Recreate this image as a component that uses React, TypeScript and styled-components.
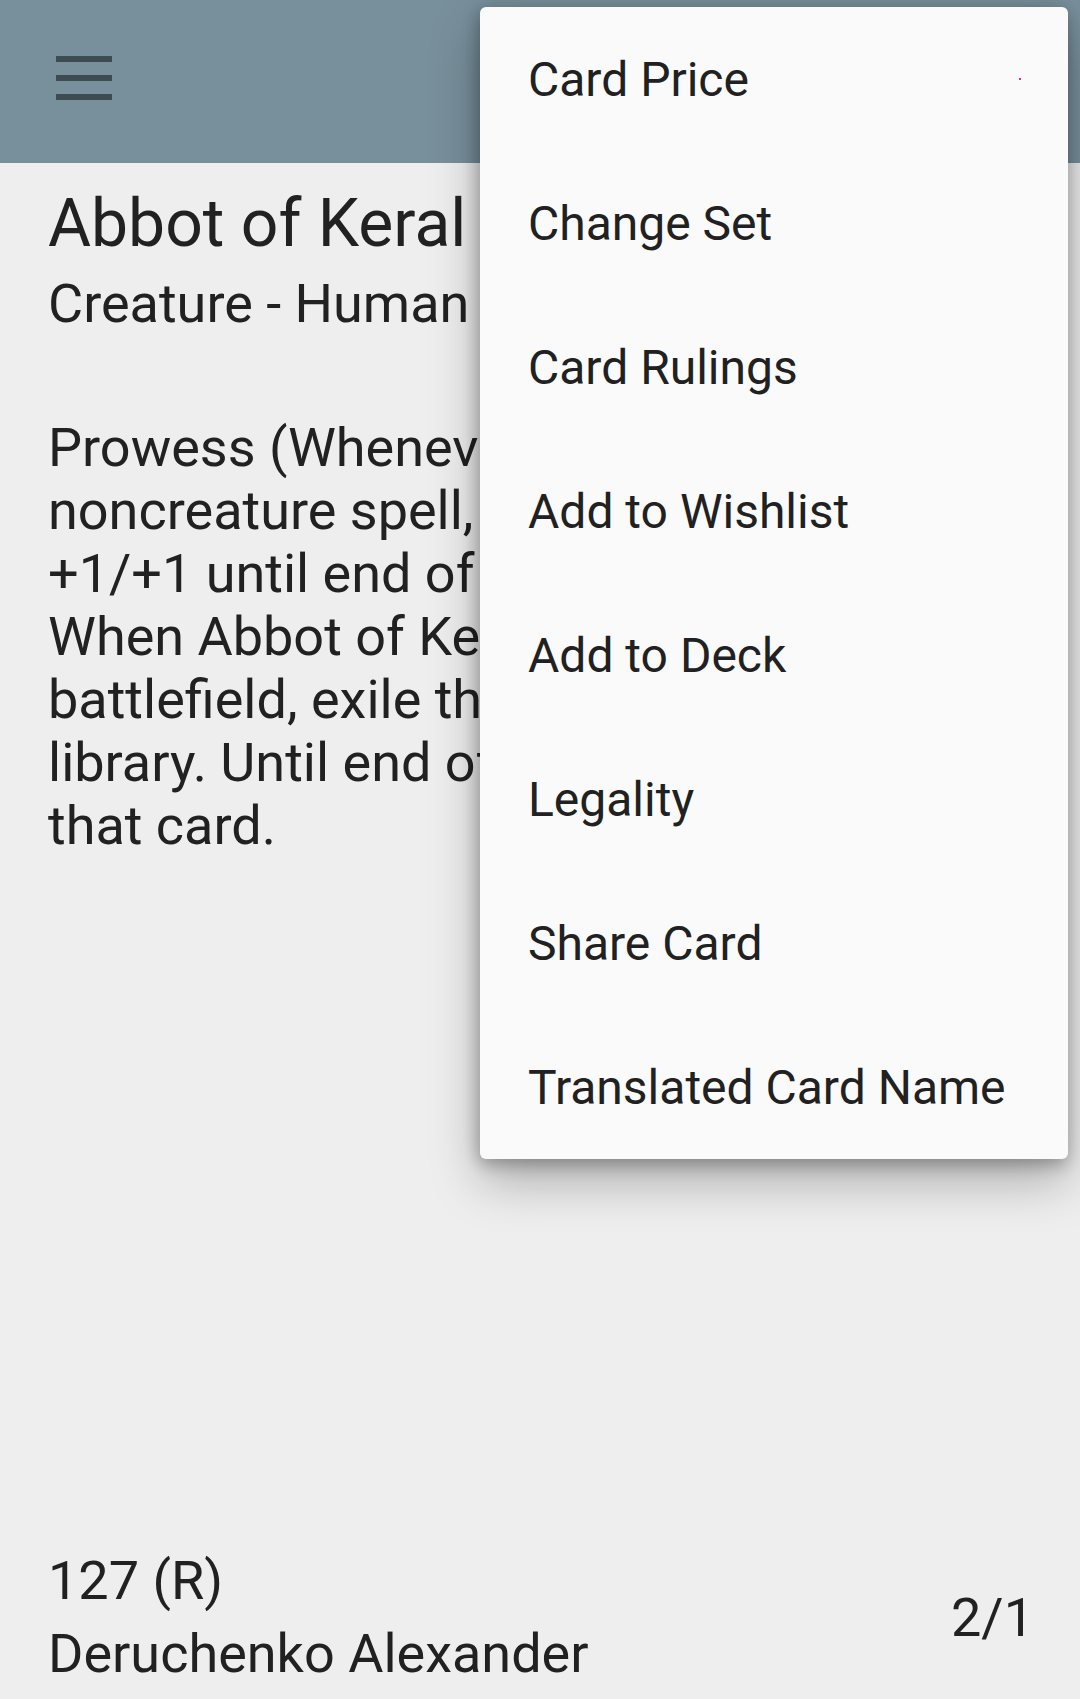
import React from "react";
import styled, { createGlobalStyle } from "styled-components";

const Global = createGlobalStyle`
  html, body { margin: 0; padding: 0; }
  body {
    background: #eeeeee;
    font-family: Roboto, "Noto Sans", "Liberation Sans", sans-serif;
    color: #212121;
  }
  #root { min-height: 1699px; }
`;

const Page = styled.div`
  position: relative;
  width: 1080px;
  height: 1699px;
  display: flex;
  flex-direction: column;
  overflow: hidden;
  background: #eeeeee;
`;

const Toolbar = styled.header`
  height: 163px;
  flex: none;
  background: #78909c;
  display: flex;
  align-items: center;
  padding-left: 56px;
  box-sizing: border-box;
`;

const MenuButton = styled.button`
  border: 0;
  background: transparent;
  padding: 0;
  width: 56px;
  height: 44px;
  display: flex;
  flex-direction: column;
  justify-content: space-between;
  margin-top: -7px;
`;

const Bar = styled.span`
  display: block;
  width: 56px;
  height: 6px;
  background: #3e4b53;
`;

const Content = styled.main`
  flex: 1;
  display: flex;
  flex-direction: column;
  padding: 22px 46px 14px 48px;
  box-sizing: border-box;
`;

const Title = styled.h1`
  margin: 0;
  font-size: 66px;
  font-weight: 400;
  line-height: normal;
  white-space: nowrap;
`;

const TypeLine = styled.div`
  margin-top: 10px;
  font-size: 54px;
  line-height: normal;
  white-space: nowrap;
`;

const Oracle = styled.div`
  margin-top: 81px;
  font-size: 54px;
  line-height: normal;
  white-space: pre;
`;

const Spacer = styled.div`
  flex: 1;
`;

const Footer = styled.footer`
  display: flex;
  align-items: center;
  justify-content: space-between;
`;

const FooterInfo = styled.div`
  display: flex;
  flex-direction: column;
  gap: 10px;
  font-size: 54px;
  line-height: normal;
`;

const PowerToughness = styled.div`
  font-size: 54px;
  line-height: normal;
`;

const Menu = styled.ul`
  position: absolute;
  top: 7px;
  right: 12px;
  width: 588px;
  margin: 0;
  padding: 0;
  list-style: none;
  background: #fafafa;
  border-radius: 6px;
  box-shadow: 0 22px 50px rgba(0, 0, 0, 0.28), 0 8px 16px rgba(0, 0, 0, 0.18),
    -4px 0 16px rgba(0, 0, 0, 0.12);
`;

const MenuItem = styled.li`
  position: relative;
  height: 144px;
  display: flex;
  align-items: center;
  padding-left: 48px;
  font-size: 48px;
  line-height: normal;
  color: #212121;
  white-space: nowrap;
`;

const Dot = styled.span`
  position: absolute;
  left: 539px;
  top: 71px;
  width: 2px;
  height: 2px;
  background: #f0325a;
`;

const items = [
  "Card Price",
  "Change Set",
  "Card Rulings",
  "Add to Wishlist",
  "Add to Deck",
  "Legality",
  "Share Card",
  "Translated Card Name",
];

const oracle = [
  "Prowess (Whenever you cast a",
  "noncreature spell, this creature gets",
  "+1/+1 until end of turn.)",
  "When Abbot of Keral Keep enters the",
  "battlefield, exile the top card of your",
  "library. Until end of turn, you may play",
  "that card.",
].join("\n");

export default function App() {
  return (
    <Page>
      <Global />
      <Toolbar>
        <MenuButton aria-label="Menu">
          <Bar />
          <Bar />
          <Bar />
        </MenuButton>
      </Toolbar>
      <Content>
        <Title>Abbot of Keral Keep</Title>
        <TypeLine>Creature - Human Monk</TypeLine>
        <Oracle>{oracle}</Oracle>
        <Spacer />
        <Footer>
          <FooterInfo>
            <span>127 (R)</span>
            <span>Deruchenko Alexander</span>
          </FooterInfo>
          <PowerToughness>2/1</PowerToughness>
        </Footer>
      </Content>
      <Menu>
        {items.map((label, i) => (
          <MenuItem key={label}>
            {label}
            {i === 0 && <Dot />}
          </MenuItem>
        ))}
      </Menu>
    </Page>
  );
}
